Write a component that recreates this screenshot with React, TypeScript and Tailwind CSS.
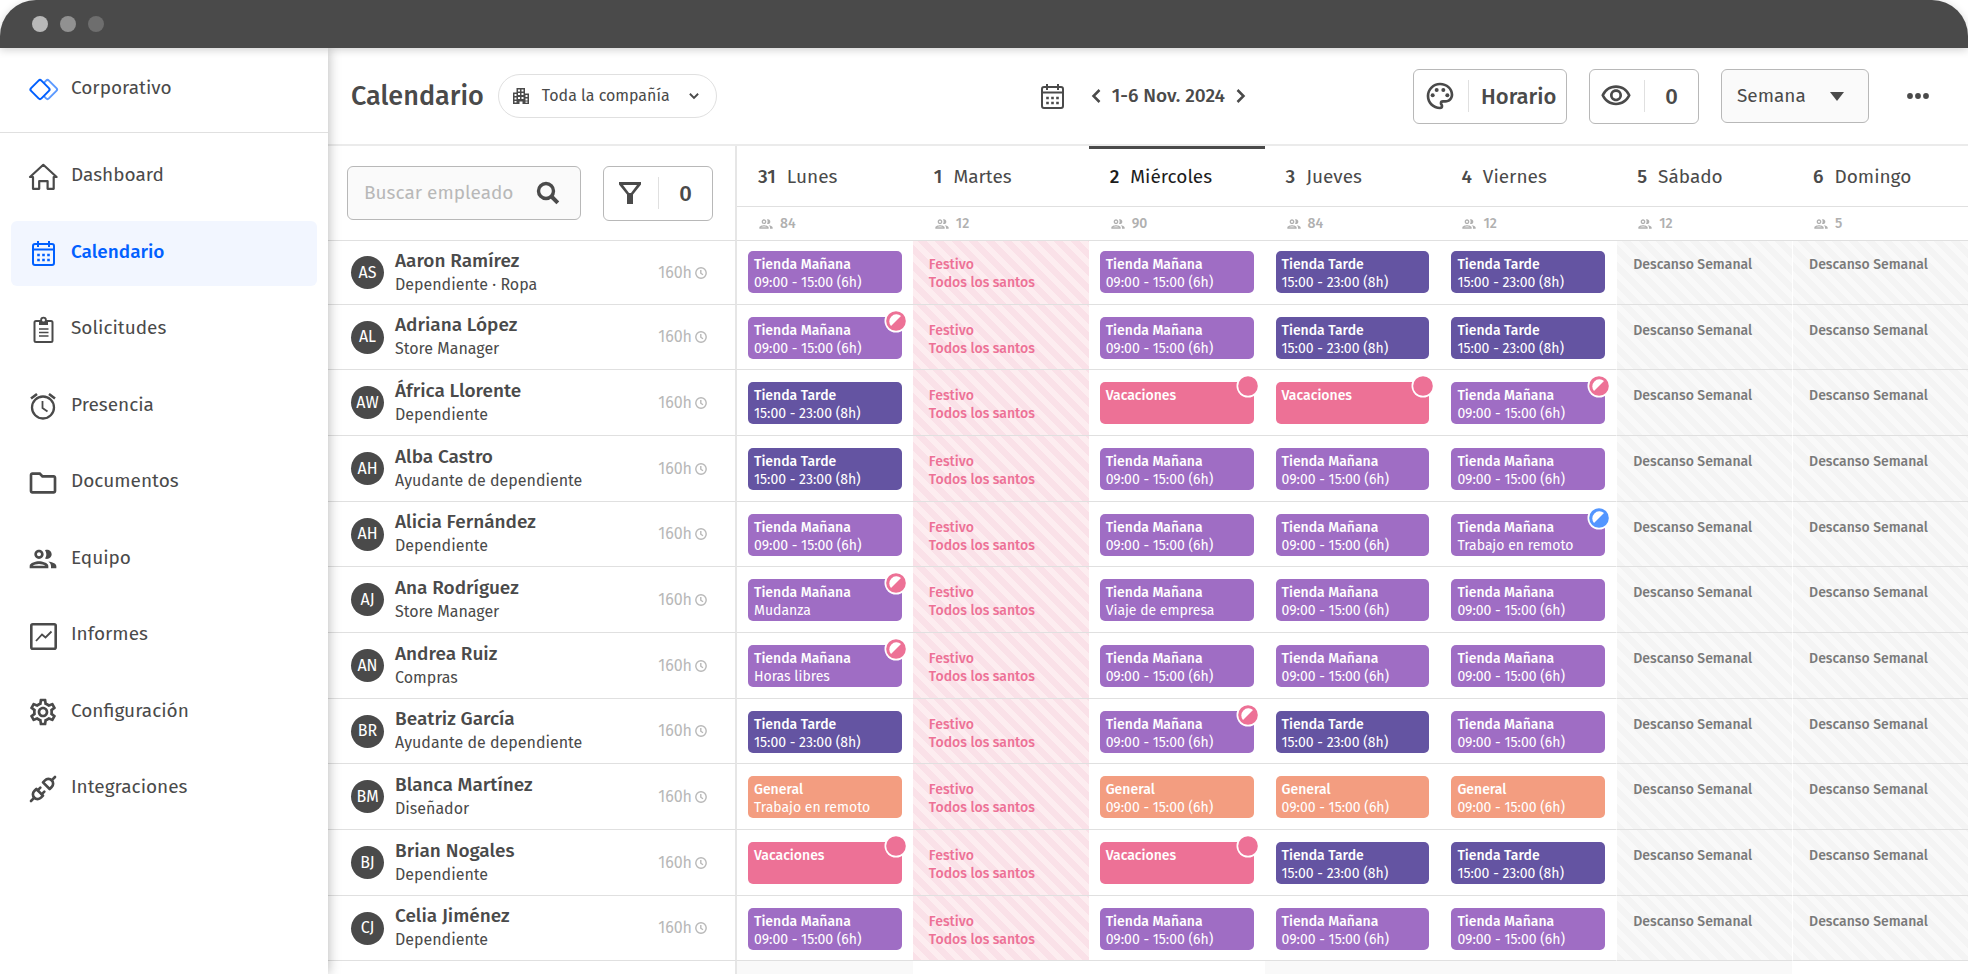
import React from 'react'
import {
    MdOutlineFolder,
    MdOutlineGroup,
    MdOutlinePalette,
    MdOutlineSettings,
    MdOutlineVisibility,
} from 'react-icons/md'
import { TbPlugConnected } from 'react-icons/tb'
import { clsx } from 'clsx'

type Kind = 'morning' | 'evening' | 'holiday' | 'general'
type Badge = 'half' | 'full' | 'remote'

interface Shift {
    kind: Kind
    title: string
    detail?: string
    badge?: Badge
}

interface Employee {
    initials: string
    name: string
    role: string
    // Monday, Wednesday, Thursday, Friday
    shifts: [Shift, Shift, Shift, Shift]
}

const M: Shift = { kind: 'morning', title: 'Tienda Mañana', detail: '09:00 - 15:00 (6h)' }
const T: Shift = { kind: 'evening', title: 'Tienda Tarde', detail: '15:00 - 23:00 (8h)' }
const V: Shift = { kind: 'holiday', title: 'Vacaciones', badge: 'full' }
const G: Shift = { kind: 'general', title: 'General', detail: '09:00 - 15:00 (6h)' }

const employees: Employee[] = [
    { initials: 'AS', name: 'Aaron Ramírez', role: 'Dependiente · Ropa', shifts: [M, M, T, T] },
    { initials: 'AL', name: 'Adriana López', role: 'Store Manager', shifts: [{ ...M, badge: 'half' }, M, T, T] },
    { initials: 'AW', name: 'África Llorente', role: 'Dependiente', shifts: [T, V, V, { ...M, badge: 'half' }] },
    { initials: 'AH', name: 'Alba Castro', role: 'Ayudante de dependiente', shifts: [T, M, M, M] },
    { initials: 'AH', name: 'Alicia Fernández', role: 'Dependiente', shifts: [M, M, M, { ...M, detail: 'Trabajo en remoto', badge: 'remote' }] },
    { initials: 'AJ', name: 'Ana Rodríguez', role: 'Store Manager', shifts: [{ ...M, detail: 'Mudanza', badge: 'half' }, { ...M, detail: 'Viaje de empresa' }, M, M] },
    { initials: 'AN', name: 'Andrea Ruiz', role: 'Compras', shifts: [{ ...M, detail: 'Horas libres', badge: 'half' }, M, M, M] },
    { initials: 'BR', name: 'Beatriz García', role: 'Ayudante de dependiente', shifts: [T, { ...M, badge: 'half' }, T, M] },
    { initials: 'BM', name: 'Blanca Martínez', role: 'Diseñador', shifts: [{ ...G, detail: 'Trabajo en remoto' }, G, G, G] },
    { initials: 'BJ', name: 'Brian Nogales', role: 'Dependiente', shifts: [V, V, T, T] },
    { initials: 'CJ', name: 'Celia Jiménez', role: 'Dependiente', shifts: [M, M, M, M] },
]

const days = [
    { number: 31, name: 'Lunes', people: 84 },
    { number: 1, name: 'Martes', people: 12 },
    { number: 2, name: 'Miércoles', people: 90, today: true },
    { number: 3, name: 'Jueves', people: 84 },
    { number: 4, name: 'Viernes', people: 12 },
    { number: 5, name: 'Sábado', people: 12 },
    { number: 6, name: 'Domingo', people: 5 },
]

const kindColors: Record<Kind, string> = {
    morning: 'bg-[#9f6dc4]',
    evening: 'bg-[#6454a2]',
    holiday: 'bg-[#ed7196]',
    general: 'bg-[#f39d80]',
}

/* ---------- icons ---------- */

const LogoIcon = () => (
    <svg width="32" height="26" viewBox="0 0 32 26" fill="none" strokeWidth="2" aria-hidden="true">
        <rect x="13.2" y="5.2" width="14.6" height="14.6" rx="2" transform="rotate(45 20.5 12.5)" stroke="#5c9aff" />
        <rect x="5.7" y="5.2" width="14.6" height="14.6" rx="2" transform="rotate(45 13 12.5)" stroke="#0160ff" fill="#fff" />
    </svg>
)

const HomeIcon = () => (
    <svg width="32" height="32" viewBox="0 0 32 32" fill="none" stroke="currentColor" strokeWidth="2.2" strokeLinejoin="round" aria-hidden="true">
        <path d="M3 16 16.3 3.8 29.6 16h-2.9v11.8h-6.1v-7.6h-8.4v7.6H6V16Z" />
    </svg>
)

const CalendarIcon = () => (
    <svg width="32" height="32" viewBox="0 0 32 32" fill="none" stroke="currentColor" strokeWidth="2" aria-hidden="true">
        <rect x="6" y="7" width="21" height="21" rx="2" />
        <path d="M6 12.5h21M11 4v6M22 4v6" />
        <path d="M10.2 18h2.6M15.2 18h2.6M20.2 18h2.6M10.2 23h2.6M15.2 23h2.6M20.2 23h2.6" strokeWidth="2.6" />
    </svg>
)

const ClipboardIcon = () => (
    <svg width="32" height="32" viewBox="0 0 32 32" fill="none" stroke="currentColor" strokeWidth="2" aria-hidden="true">
        <rect x="7.5" y="7" width="18" height="21" rx="1.5" />
        <path d="M12 6h2a2.5 2.5 0 0 1 5 0h2v5h-9Z" fill="currentColor" stroke="none" />
        <circle cx="16.500" cy="6" r="2.400" fill="#fff" strokeWidth="1.8" />
        <path d="M12 15h9.5M12 18.5h9.5M12 22h9.5" strokeWidth="1.6" />
    </svg>
)

const AlarmIcon = () => (
    <svg width="32" height="32" viewBox="0 0 32 32" fill="none" stroke="currentColor" strokeWidth="2.3" aria-hidden="true">
        <circle cx="16" cy="17.5" r="11" />
        <path d="M15.5 11v7l5 3.500" strokeWidth="1.8" />
        <path d="m4 8.500 6-4.500M28 8.500 22 4" strokeWidth="2.6" />
    </svg>
)

const ChartIcon = () => (
    <svg width="32" height="32" viewBox="0 0 32 32" fill="none" stroke="currentColor" strokeWidth="2.6" aria-hidden="true">
        <rect x="4.3" y="4.3" width="24.4" height="24.4" rx="1.500" />
        <path d="m9 21 6-6.500 3.500 3 6-6" strokeWidth="1.8" />
    </svg>
)

const BuildingIcon = () => (
    <svg width="18" height="18" viewBox="0 0 18 18" fill="currentColor" aria-hidden="true">
        <path
            fillRule="evenodd"
            d="M4.5 1h8.500v5.500H17V17h-6.500v-2.500h-3V17H1V5.500h3.500Z M6 2.500v2h2v-2Z M9.500 2.500v2h2v-2Z M6 6v2h2V6Z M9.500 6v2h2V6Z M2.500 7v2h2V7Z M6 10v2h2v-2Z M9.500 10v2h2v-2Z M13.500 8v2h2V8Z M2.500 10.500v2h2v-2Z M13.500 11.500v2h2v-2Z M2.500 14v1.500h2V14Z M13.500 14.500v1.200h2v-1.200Z"
        />
    </svg>
)

const SearchIcon = () => (
    <svg width="24" height="24" viewBox="0 0 24 24" fill="none" stroke="currentColor" aria-hidden="true">
        <circle cx="10" cy="10" r="7.5" strokeWidth="3.4" />
        <path d="m15.5 15.5 6.3 6.3" strokeWidth="4" />
    </svg>
)

const FilterIcon = () => (
    <svg width="24" height="24" viewBox="0 0 24 24" fill="currentColor" aria-hidden="true">
        <path fillRule="evenodd" d="M1 1h22v2.5L15 13.5V23H9v-9.5L1 3.5Z M5 4l6 8h2l6-8Z" />
    </svg>
)

const ChevronIcon = ({ path, size }: { path: string; size: number }) => (
    <svg width={size} height={size} viewBox="0 0 16 16" fill="none" stroke="currentColor" strokeWidth="2.5" aria-hidden="true">
        <path d={path} />
    </svg>
)

const ClockIcon = () => (
    <svg width="12" height="12" viewBox="0 0 12 12" fill="none" stroke="currentColor" strokeWidth="1.4" aria-hidden="true">
        <circle cx="6" cy="6" r="5.2" />
        <path d="M5.8 3v3.2L8 7.8" />
    </svg>
)

const BadgeIcon = ({ badge }: { badge: Badge }) => {
    const color = badge === 'remote' ? '#5396ff' : '#ed7196'
    return (
        <svg className="absolute -top-2 -right-1.5" width="24" height="24" viewBox="0 0 24 24" aria-hidden="true">
            <circle cx="12" cy="12" r="11.5" fill="#fff" />
            <circle cx="12" cy="12" r="9.8" fill={color} />
            {badge !== 'full' && <path d="M17 7A7.1 7.1 0 0 0 7 17Z" fill="#fff" />}
        </svg>
    )
}

/* ---------- sidebar ---------- */

const navItems = [
    { label: 'Dashboard', icon: <HomeIcon /> },
    { label: 'Calendario', icon: <CalendarIcon />, active: true },
    { label: 'Solicitudes', icon: <ClipboardIcon /> },
    { label: 'Presencia', icon: <AlarmIcon /> },
    { label: 'Documentos', icon: <MdOutlineFolder size={32} /> },
    { label: 'Equipo', icon: <MdOutlineGroup size={32} /> },
    { label: 'Informes', icon: <ChartIcon /> },
    { label: 'Configuración', icon: <MdOutlineSettings size={32} /> },
    { label: 'Integraciones', icon: <TbPlugConnected size={32} /> },
]

const Sidebar = () => (
    <aside className="relative z-10 w-[328px] shrink-0 bg-white shadow-[0_0_12px_rgba(0,0,0,0.3)]">
        <div className="flex h-[85px] items-center gap-3 border-b border-[#e0e0e0] pl-[27px]">
            <LogoIcon />
            <span className="pb-1">Corporativo</span>
        </div>
        <nav className="mx-[11px] mt-[11px] flex h-[677px] flex-col justify-between">
            {navItems.map((item) => (
                <a
                    key={item.label}
                    href="#"
                    aria-current={item.active ? 'page' : undefined}
                    className={clsx(
                        'flex h-[65px] items-center gap-3 rounded-md pl-4',
                        item.active && 'bg-[#f2f6ff] font-medium text-[#0160ff]',
                    )}
                >
                    {item.icon}
                    <span className="pb-0.5">{item.label}</span>
                </a>
            ))}
        </nav>
    </aside>
)

/* ---------- toolbar ---------- */

const Toolbar = () => (
    <header className="flex h-[98px] items-center border-b-2 border-[#ebebeb] pr-[37px] pl-[23px]">
        <h1 className="text-[27px] font-medium">Calendario</h1>
        <button type="button" className="ml-3.5 flex h-11 items-center rounded-full border border-[#e0e0e0] pr-4 pl-[13px] text-base">
            <BuildingIcon />
            <span className="mr-[18px] ml-3">Toda la compañía</span>
            <ChevronIcon size={12} path="M2.5 5 8 10.5 13.5 5" />
        </button>

        <div className="mr-[164px] ml-auto flex items-center">
            <button type="button" aria-label="Elegir fecha">
                <CalendarIcon />
            </button>
            <button type="button" aria-label="Semana anterior" className="ml-5">
                <ChevronIcon size={16} path="M11.5 2 5.5 8l6 6" />
            </button>
            <span className="mx-2 font-medium">1-6 Nov. 2024</span>
            <button type="button" aria-label="Semana siguiente">
                <ChevronIcon size={16} path="m4.5 2 6 6-6 6" />
            </button>
        </div>

        <div className="flex items-center gap-[22px]">
            <button type="button" className="flex h-[55px] w-[154px] items-center rounded-md border border-[#b8b8b8] pl-2.5 text-[22px] font-medium">
                <MdOutlinePalette size={32} />
                <span className="mr-3 ml-3 h-8 border-l border-[#e0e0e0]" />
                Horario
            </button>
            <button type="button" aria-label="Visibles: 0" className="flex h-[55px] w-[110px] items-center rounded-md border border-[#b8b8b8] pl-2.5 text-[22px] font-medium">
                <MdOutlineVisibility size={32} />
                <span className="ml-3 h-8 border-l border-[#e0e0e0]" />
                <span className="flex-1 text-center">0</span>
            </button>
            <label className="relative flex h-[54px] w-[148px] items-center">
                <select
                    aria-label="Vista"
                    defaultValue="Semana"
                    className="h-full w-full appearance-none rounded-md border border-[#b8b8b8] bg-[#fafafa] pl-[15px] text-[19px]"
                >
                    <option>Semana</option>
                </select>
                <svg className="pointer-events-none absolute right-[25px]" width="14" height="9" viewBox="0 0 14 9" fill="currentColor" aria-hidden="true">
                    <path d="M0 0h14L7 9Z" />
                </svg>
            </label>
            <button type="button" aria-label="Más opciones" className="ml-3.5">
                <svg width="26" height="8" viewBox="0 0 26 8" fill="currentColor" aria-hidden="true">
                    <circle cx="5" cy="4" r="2.9" />
                    <circle cx="13" cy="4" r="2.9" />
                    <circle cx="21" cy="4" r="2.9" />
                </svg>
            </button>
        </div>
    </header>
)

/* ---------- calendar ---------- */

const ShiftCard = ({ shift }: { shift: Shift }) => (
    <div className={clsx('relative h-[42px] rounded-[5px] px-1.5 pt-[5px] text-white', kindColors[shift.kind])}>
        <p className="font-medium">{shift.title}</p>
        {shift.detail && <p>{shift.detail}</p>}
        {shift.badge && <BadgeIcon badge={shift.badge} />}
    </div>
)

const cell = 'border-b border-[#e0e0e0] align-top text-sm leading-[18px]'

const ShiftCell = ({ shift }: { shift: Shift }) => (
    <td className={clsx(cell, 'px-[11px] pt-3 group-first:pt-2.5')}>
        <ShiftCard shift={shift} />
    </td>
)

const RestCell = () => (
    <td
        className={clsx(
            cell,
            'border-l border-l-white bg-[repeating-linear-gradient(45deg,#f4f4f4_0_6px,#f9f9f9_6px_12px)] pt-[17px] pl-4 font-medium text-[#7a7a7a] group-first:pt-[15px]',
        )}
    >
        Descanso Semanal
    </td>
)

const EmployeeRow = ({ employee }: { employee: Employee }) => {
    const [monday, ...rest] = employee.shifts
    return (
        <tr className="group h-[66px] first:h-16 [&:nth-child(3n+2)]:h-[65px]">
            <th scope="row" className="border-r-2 border-b border-[#e0e0e0] border-r-[#e6e6e6] pr-7 pl-[23px] text-left font-normal">
                <div className="flex items-center">
                    <span className="flex size-[33px] shrink-0 items-center justify-center rounded-full bg-[#4a4a4a] text-base text-white">
                        {employee.initials}
                    </span>
                    <span className="ml-[11px] flex flex-col leading-6">
                        <span className="font-medium">{employee.name}</span>
                        <span className="text-base leading-6">{employee.role}</span>
                    </span>
                    <span className="ml-auto flex items-center gap-[3px] text-base text-[#b8b8b8]">
                        160h <ClockIcon />
                    </span>
                </div>
            </th>
            <ShiftCell shift={monday} />
            <td
                className={clsx(
                    cell,
                    'bg-[repeating-linear-gradient(45deg,#fae1e8_0_6px,#fdedf0_6px_12px)] pt-[17px] pl-4 font-medium text-[#ed7196] group-first:pt-[15px]',
                )}
            >
                <p>Festivo</p>
                <p>Todos los santos</p>
            </td>
            {rest.map((shift, i) => (
                <ShiftCell key={i} shift={shift} />
            ))}
            <RestCell />
            <RestCell />
        </tr>
    )
}

const Calendar = () => (
    <table className="w-full table-fixed border-separate border-spacing-0">
        <thead>
            <tr className="h-[61px]">
                <th rowSpan={2} className="w-[409px] border-r-2 border-b border-[#e0e0e0] border-r-[#e6e6e6] pr-[22px] pl-[19px] font-normal">
                    <div className="flex items-center gap-[22px]">
                        <label className="flex h-[54px] flex-1 items-center rounded-md border border-[#b8b8b8] bg-[#fafafa] pr-5 pl-4">
                            <input
                                type="search"
                                aria-label="Buscar empleado"
                                placeholder="Buscar empleado"
                                className="w-0 flex-1 bg-transparent outline-none placeholder:text-[#b8b8b8]"
                            />
                            <SearchIcon />
                        </label>
                        <button type="button" aria-label="Filtros: 0" className="flex h-[55px] w-[110px] items-center rounded-md border border-[#b8b8b8] pl-3.5 text-[22px] font-medium">
                            <FilterIcon />
                            <span className="ml-4 h-8 border-l border-[#e0e0e0]" />
                            <span className="flex-1 text-center">0</span>
                        </button>
                    </div>
                </th>
                {days.map((day) => (
                    <th
                        key={day.name}
                        scope="col"
                        className={clsx(
                            'border-t-[3px] border-b border-b-[#e0e0e0] pl-[21px] text-left font-normal',
                            day.today ? 'border-t-[#4a4a4a] text-[#1c1c1c]' : 'border-t-transparent',
                        )}
                    >
                        <span className="mr-[11px] font-medium">{day.number}</span>
                        {day.name}
                    </th>
                ))}
            </tr>
            <tr className="h-[34px]">
                {days.map((day) => (
                    <td key={day.name} className="border-b border-[#e0e0e0] pl-[21px] text-sm text-[#b0b0b0]">
                        <span className="flex items-center gap-1.5 font-medium">
                            <MdOutlineGroup size={16} />
                            {day.people}
                        </span>
                    </td>
                ))}
            </tr>
        </thead>
        <tbody>
            {employees.map((employee) => (
                <EmployeeRow key={employee.name} employee={employee} />
            ))}
        </tbody>
        <tfoot>
            <tr className="h-16">
                <td className="border-r-2 border-[#e6e6e6]" />
                <td className="bg-[#f9f9f9]" />
                <td />
                <td />
                <td className="bg-[#f9f9f9]" />
                <td className="bg-[#f9f9f9]" />
                <td className="bg-[#f9f9f9]" />
                <td />
            </tr>
        </tfoot>
    </table>
)

export default function App() {
    return (
        <div className="flex h-screen flex-col overflow-hidden bg-white font-['Fira_Sans','Noto_Sans',sans-serif] text-[19px] text-[#4a4a4a]">
            <div className="relative z-20 flex h-12 shrink-0 items-center gap-3 rounded-t-[36px] bg-[#4a4a4a] pl-8 shadow-[0_2px_8px_rgba(0,0,0,0.18)]">
                <span className="size-4 rounded-full bg-[#b8b8b8]" />
                <span className="size-4 rounded-full bg-[#919191]" />
                <span className="size-4 rounded-full bg-[#6e6e6e]" />
            </div>
            <div className="flex min-h-0 flex-1">
                <Sidebar />
                <main className="min-w-0 flex-1">
                    <Toolbar />
                    <Calendar />
                </main>
            </div>
        </div>
    )
}
